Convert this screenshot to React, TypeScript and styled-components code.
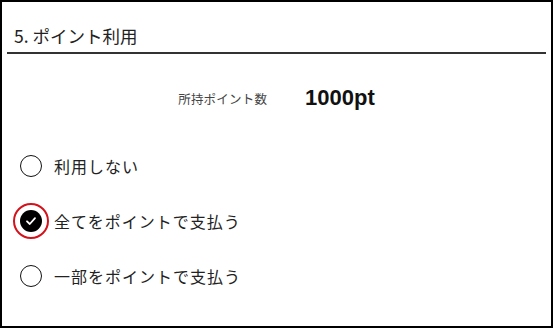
import { createGlobalStyle } from 'styled-components'
import styled from 'styled-components'

const GlobalStyle = createGlobalStyle`
  html, body {
    margin: 0;
    padding: 0;
    background: #fff;
  }
  body {
    font-family: 'Noto Sans CJK JP', 'Noto Sans', sans-serif;
    color: #222;
  }
`

const Frame = styled.div`
  box-sizing: border-box;
  width: 553px;
  height: 328px;
  border: 2px solid #000;
  display: flex;
  flex-direction: column;
`

const SectionHeader = styled.h2`
  margin: 21px 5px 0;
  padding: 0 0 3px 7px;
  border-bottom: 2px solid #333;
  font-size: 17.5px;
  font-weight: 400;
  line-height: 26px;
  color: #222;
`

const BalanceRow = styled.div`
  display: flex;
  align-items: center;
  justify-content: center;
  gap: 38px;
  margin-top: 26px;
  height: 36px;
`

const BalanceLabel = styled.span`
  font-size: 12.5px;
  color: #444;
  letter-spacing: 0.2px;
`

const BalanceValue = styled.span`
  font-family: 'Liberation Sans', Arial, sans-serif;
  font-size: 22px;
  font-weight: 700;
  color: #111;
`

const OptionList = styled.div`
  display: flex;
  flex-direction: column;
  gap: 23px;
  margin-top: 34px;
  padding-left: 18px;
`

const Option = styled.label`
  display: flex;
  align-items: center;
  gap: 12px;
  height: 32px;
  font-size: 16px;
  letter-spacing: 1px;
  color: #222;
`

const RadioMark = styled.span<{ $checked?: boolean }>`
  box-sizing: border-box;
  width: 22px;
  height: 22px;
  border-radius: 50%;
  display: flex;
  align-items: center;
  justify-content: center;
  flex: none;
  border: ${(p) => (p.$checked ? 'none' : '1.6px solid #111')};
  background: ${(p) => (p.$checked ? '#000' : '#fff')};
  outline: ${(p) => (p.$checked ? '2.5px solid #d3121c' : 'none')};
  outline-offset: 5px;
`

const options = [
  { label: '利用しない', checked: false },
  { label: '全てをポイントで支払う', checked: true },
  { label: '一部をポイントで支払う', checked: false },
]

export default function App() {
  return (
    <>
      <GlobalStyle />
      <Frame>
        <SectionHeader>5. ポイント利用</SectionHeader>
        <BalanceRow>
          <BalanceLabel>所持ポイント数</BalanceLabel>
          <BalanceValue>1000pt</BalanceValue>
        </BalanceRow>
        <OptionList>
          {options.map((o) => (
            <Option key={o.label}>
              <RadioMark $checked={o.checked}>
                {o.checked && (
                  <svg width="12" height="12" viewBox="0 0 12 12">
                    <polyline
                      points="2,6.3 4.8,9 10,3.2"
                      fill="none"
                      stroke="#fff"
                      strokeWidth="1.8"
                      strokeLinecap="round"
                      strokeLinejoin="round"
                    />
                  </svg>
                )}
              </RadioMark>
              {o.label}
            </Option>
          ))}
        </OptionList>
      </Frame>
    </>
  )
}
